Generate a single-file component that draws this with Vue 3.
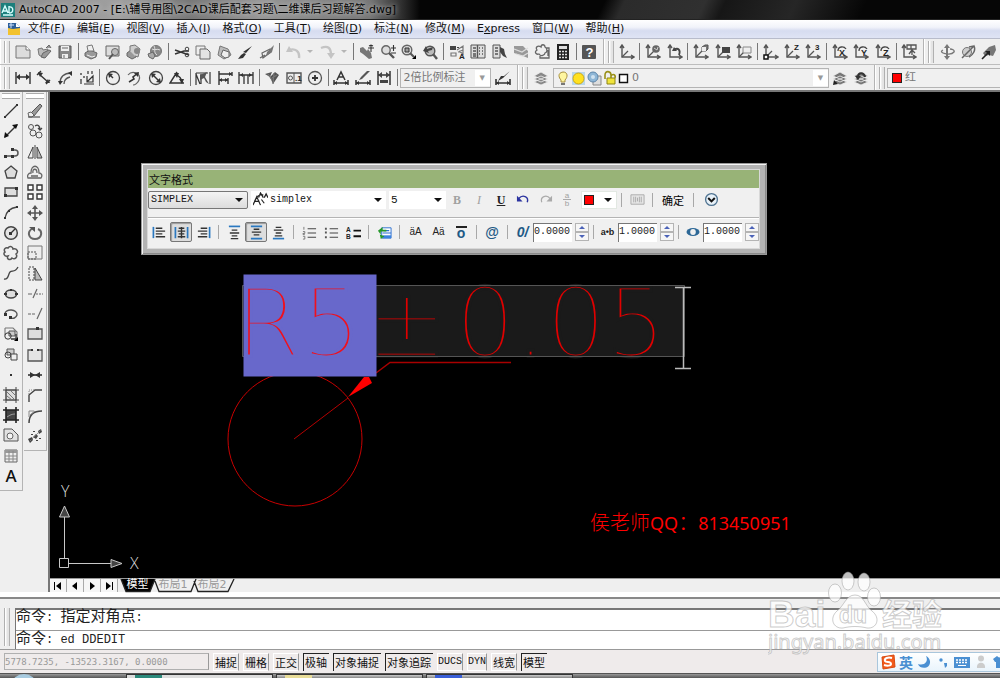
<script setup>
import { ref } from 'vue'

const axes = '<path d="M3 1v12h12M1 4l2-3 2 3M12 11l3 2-3 2" fill="none" stroke="#555" stroke-width="1.4"/>'
const diag = '<path d="M3 13L9 7" stroke="#555" stroke-width="1.2"/>'
const glyph = (t, x, y, s = 9) => `<text x="${x}" y="${y}" font-size="${s}" font-weight="700" font-family="Liberation Sans, sans-serif" fill="#222">${t}</text>`
const st = (d, w = 1.3, c = '#333') => `<path d="${d}" fill="none" stroke="${c}" stroke-width="${w}"/>`
const fl = (d, c = '#333') => `<path d="${d}" fill="${c}"/>`
const layers = (c = '#888') => `<path d="M1 12l7-3 7 3-7 3zM1 9l7-3 7 3-7 3zM1 6l7-4 7 4-7 3z" fill="${c}" stroke="#eee" stroke-width=".8"/>`

const icons = {
  new: '<path d="M1 2h10l4 4v8H1z" fill="#ddd" stroke="#777"/><path d="M11 2v4h4" fill="#fff" stroke="#777"/>',
  open: '<path d="M2 5l4-1 1 2 5-1-4 9-5-3z" fill="#bbb" stroke="#777"/><path d="M7 9l6-3 2 1-6 7-4-1zM10 4l3-3 2 3" fill="#999" stroke="#666"/>',
  save: '<path d="M2 2h12v12H2z" fill="#888" stroke="#555"/><path d="M4 2h8v5H4zM5 10h6v4H5z" fill="#eee"/><path d="M5 4h6M7 11v3" stroke="#666"/>',
  plot: '<path d="M2 9l5-3 7 3-1 4-5 2-6-3z" fill="#999" stroke="#666"/><path d="M5 7l-1-5 5-1 2 6z" fill="#eee" stroke="#777"/><path d="M4 11l5 2 3-1" stroke="#eee" fill="none"/>',
  preview: '<path d="M1 2h13v10H1z" fill="#ddd" stroke="#666"/><circle cx="10" cy="8" r="3.500" fill="#bbb" stroke="#666"/><path d="M8 10l-4 5" stroke="#555" stroke-width="2"/>',
  publish: '<path d="M1 9l4-3 6 3-1 4-4 2-5-3z" fill="#999" stroke="#666"/><path d="M4 7V2l5-1 5 4-2 8-3-1" fill="#ccc" stroke="#777"/><circle cx="11" cy="7" r="3" fill="#888"/>',
  dwf: '<circle cx="9" cy="7" r="5.500" fill="#888" stroke="#777"/><path d="M5 5c3 2 5-1 8 1M7 2c2 3-1 6 3 9" stroke="#ddd" fill="none"/><path d="M1 10l5-2 2 4-2 3-4-2z" fill="#aaa" stroke="#666"/>',
  cut: st('M1 6l14 5M1 10l9-3h5', 1.5) + '<circle cx="13" cy="5" r="1.800" fill="none" stroke="#444"/><circle cx="13" cy="11" r="1.800" fill="none" stroke="#444"/>',
  copy: '<path d="M1 2h9v9H1z" fill="#eee" stroke="#777"/><path d="M5 5h7l3 3v7H5z" fill="#e4e4e4" stroke="#666"/>',
  paste: '<path d="M4 2l8 3 3 6-7 4-6-4z" fill="#bbb" stroke="#777"/><path d="M7 6l6 2v5l-4 1-4-3z" fill="#eee" stroke="#666"/>',
  brush: fl('M15 2l-6 7-3-1zM7 9l2 1-3 4-5 1 3-4z', '#333'),
  blockedit: st('M3 9l8-4 1 3-8 6zM1 14l5-3', 1.2, '#666') + fl('M8 8l7-7-2 7-6 4z', '#777'),
  undo: st('M14 14c1-7-4-10-10-8', 2.4, '#c4c4c4') + fl('M1 8l3-6 4 6z', '#c4c4c4'),
  redo: st('M2 4c7-3 10 0 10 7', 2.4, '#c4c4c4') + fl('M8 9h8l-4 6z', '#c4c4c4'),
  pan: fl('M1 4l3-1 4 4 1-2 3 4 1 5-3 1-6-5-3-2z', '#777') + st('M12 1v7M9 4h6M10 2l2-1 2 1', 1.1),
  zoomrt: '<circle cx="6" cy="6" r="4.200" fill="#ddd" stroke="#666" stroke-width="1.400"/>' + st('M9 9l5 5', 2.4, '#555') + st('M11 4h5M13.500 1v6M11 9h5', 1.1),
  zoomwin: '<circle cx="6" cy="6" r="4.800" fill="#ddd" stroke="#666" stroke-width="1.400"/><path d="M4 4h4v4H4z" fill="#999" stroke="#333"/>' + st('M9 9l4 4', 2.2, '#555') + fl('M15 11v4h-4z', '#000'),
  zoomprev: '<circle cx="8" cy="7" r="4.800" fill="#bbb" stroke="#555" stroke-width="1.400"/>' + st('M11 10l4 5', 2.4, '#555') + fl('M1 7l3-5 1 3 6-2-1 3-4 1 1 2z', '#444'),
  props: fl('M1 2h6v4H1zM8 3h2v1H8z', '#444') + st('M8 6l6-4v8l-4-3M2 9h5v3H2zM9 8l5-2', 1.2, '#777') + glyph('A', 10, 15, 8),
  dcenter: '<path d="M1 1h14v13H1z" fill="#ddd" stroke="#555"/>' + st('M3 4h3M3 7h3M3 10h3M3 12h3M9 4h1M12 4h1M9 7h1M12 7h1M9 10h1M12 10h1M7.500 1v13', 1.4, '#555'),
  palettes: '<path d="M2 1h7v13H2z" fill="#ddd" stroke="#555"/>' + st('M4 4h3M4 7h3M4 10h3', 1.4, '#555') + fl('M9 3l4 2 1 5 2 4-4-2-3-4z', '#444'),
  sheets: fl('M1 2h9l5 5v7l-5-2-9-3z', '#999') + st('M1 5l8 3 6-4M3 10l7 2 5-3', 1.3, '#ddd'),
  markup: st('M12 4h3v10H6v-2M14 6v6M11 3c0-3-4-3-4 0-3-2-6 0-4 3-3 2-1 5 2 4 2 3 6 1 6-1 3-1 2-5 0-6z', 1.3, '#666'),
  calc: '<path d="M2 0h12v16H2z" fill="#222"/><path d="M4 2h8v3H4z" fill="#ddd"/><path d="M4 7.500h8M4 10.500h8M4 13.500h8" stroke="#ddd" stroke-width="1.500" stroke-dasharray="2 1"/>',
  help: '<rect x="1" y="1" width="14" height="14" rx="1" fill="#555"/><text x="4.500" y="13" font-size="13" font-weight="700" font-family="Liberation Sans, sans-serif" fill="#fff">?</text>',
  ucs: axes + diag, ucsworld: axes + diag + '<circle cx="11" cy="5" r="3.800" fill="#666"/><path d="M9 4l3 2 1-3" stroke="#ccc" fill="none"/>',
  ucsprev: axes + st('M12 11c2-5-1-8-5-5', 1.8, '#444') + fl('M5 7l2-4 3 4z', '#444'),
  ucsface: axes + diag + '<path d="M9 3l3-2h3v4l-2 2H9z" fill="#777" stroke="#555"/><path d="M9 3h4v4H9z" fill="#eee"/>',
  ucsobj: axes + diag + '<path d="M7 3h8v6H7z" fill="#444"/>', ucsview: axes + diag + '<path d="M7 3h8v6H7z" fill="#eee" stroke="#888"/>',
  ucsorigin: axes + diag + '<path d="M1 11h4v4H1z" fill="#fff" stroke="#111" stroke-width="1.500"/>',
  ucsz: axes + diag + glyph('Z', 10, 6, 8), ucs3: axes + diag + glyph('3', 10, 6, 8),
  rotx: axes + st('M6 7c0-5 6-5 8-2', 1.3, '#444') + glyph('X', 7, 12, 9), roty: axes + st('M6 7c0-5 6-5 8-2', 1.3, '#444') + glyph('Y', 8, 12, 9), rotz: axes + st('M6 7c0-5 6-5 8-2', 1.3, '#444') + glyph('Z', 8, 12, 9),
  ucsapply: axes + st('M6 1h9v4H6zM10 1v4M8 10l3-4v5M11 6l3 3', 1.3, '#555'),
  orbit1: fl('M8 0l3 4H9v8h2l-3 4-3-4h2V4H5z', '#777') + st('M4 6c-6 3 8 6 11 2 1-2-2-3-4-3', 1.3, '#777'),
  orbit2: '<circle cx="7" cy="8" r="4.500" fill="#ccc" stroke="#777"/>' + st('M2 14L14 2c2 4-1 9-5 11M9 3l5-1', 1.5, '#666'),
  orbit3: fl('M2 9l3-3 3-3 6-2 1 5-3 6-4-1-4 1z', '#777') + st('M1 15l7-7', 1.6, '#222') + fl('M9 7v5L4 7z', '#222'),
  linear: st('M1 2v12M15 2v12M2 7h12', 1.4) + fl('M1 7l4-3v6zM15 7l-4-3v6z'),
  aligned: st('M1 5l4-4M10 14l4-4M3 4l9 8', 1.4) + fl('M2 2l5 1-3 4zM14 13l-5 0 3-4z'),
  arc: st('M3 13C3 7 7 3 14 3M7 14c0-4 2-6 6-7', 1.3, '#555') + fl('M15 1v5l-4-3zM1 11h5l-3 4z'),
  ordinate: st('M2 14V9M5 14h10M8 6v6h6V6l-6 6M9 1v3M13 1v3', 1.2) + fl('M1 3h2v2H1zM4 6h2v2H4zM1 9h2v2H1z', '#777'),
  radius: '<circle cx="8" cy="8" r="6.500" fill="#eee" stroke="#444" stroke-width="1.300"/>' + st('M8 8L4 4', 1.4) + fl('M3 3l5 1-4 4z'),
  jogged: st('M2 5c4-5 14-2 11 5-1 3-4 5-6 5', 1.2, '#666') + st('M3 12l5-3-1-2 5-4', 1.6) + fl('M13 2l-1 5-4-4z'),
  diameter: '<circle cx="8" cy="8" r="6.500" fill="#eee" stroke="#444" stroke-width="1.300"/>' + st('M4 4l8 8', 1.5) + fl('M3 3l5 1-4 4zM13 13l-5-1 4-4z'),
  angular: st('M8 2L1 13h14M6 5c4 0 7 4 7 8', 1.4) + fl('M5 3h5l-2 5zM10 9h5l-2 5z'),
  quick: st('M1 3v12M1 3l12 0M15 2v12M1 4l4 10M6 4v10', 1.2) + fl('M5 5l7-3-2 5 4 7-3-2-2-4-4 2z', '#555'),
  baseline: st('M2 1v14M2 4h13M2 10h9M11 8v6M15 2v4', 1.4) + fl('M2 10l3-2v4zM15 4l-3-2v4zM11 10l-3-2v4z'),
  continue: st('M1 2v12M6 5v9M10 5v9M15 2v12M1 5h14', 1.3) + fl('M5 3v4l-3-2zM11 3v4l3-2z'),
  leader: fl('M1 4l7-2-2 5zM6 7l5-5 4 3-6 9z', '#555') + st('M4 4l4 6M10 3l-1 11M13 5l-5 3', 1.2, '#777'),
  tolerance: '<path d="M1 3h14v10H1z" fill="#eee" stroke="#555" stroke-width="1.400"/><path d="M8 3v10" stroke="#555"/><circle cx="4.500" cy="8" r="2" fill="none" stroke="#555"/>' + glyph('.1', 9, 11, 8),
  center: '<circle cx="8" cy="8" r="6.500" fill="#eee" stroke="#555" stroke-width="1.300"/>' + st('M8 5v6M5 8h6', 1.8),
  dimedit: st('M1 10v5M15 10v5M1 13h14M4 10l4-8 4 8M5 7h6', 1.5) + fl('M1 13l3-2v4zM15 13l-3-2v4z'),
  dimtedit: st('M1 10v5M15 10v5M1 13h14', 1.5) + fl('M15 1l-8 8-3 1 2-3 6-6z', '#555') + fl('M1 13l3-2v4zM15 13l-3-2v4z'),
  dimupdate: st('M2 1v14M14 1v14M2 5h12', 1.5) + fl('M2 5l4-3v6zM14 5l-4-3v6zM4 10h8v3H4z', '#444'),
  dimstyle: st('M1 9v6M15 9v6M1 13h14', 1.6) + fl('M15 1l-7 7-5 3 3-5 3 0z') + fl('M1 13l3-2v4zM15 13l-3-2v4z'),
  layers: layers(), layerobj: layers('#777') + fl('M1 15l1-5 4 4z', '#222'), layerprev: layers('#777') + st('M5 7c0-5 6-5 7 0', 2, '#333') + fl('M2 6h6l-3 4z'),
  line: st('M2 14L14 2', 1.3) + fl('M1 13h2v2H1zM13 1h2v2h-2z'),
  xline: st('M2 14L14 2', 1.5) + fl('M1 15l1-6 4 4zM15 1l-6 1 4 4z', '#111'),
  pline: st('M3 12h9c4 0 4-6 0-6h-2', 1.5, '#555') + fl('M1 11h3v3H1zM8 11h3v3H8zM8 4h3v3H8z'),
  polygon: '<path d="M8 2l6 5-2 7H4L2 7z" fill="#ddd" stroke="#444" stroke-width="1.300"/>',
  rect: '<path d="M2 4h12v8H2z" fill="#ddd" stroke="#444" stroke-width="1.300"/>' + fl('M1 10h3v3H1zM12 3h3v3h-3z'),
  arcd: st('M2 14C3 8 7 4 14 3', 1.3, '#444') + fl('M1 13h2v2H1zM5 6h2v2H5zM13 2h2v2h-2z'),
  circle: '<circle cx="8" cy="8" r="6.300" fill="#e4e4e4" stroke="#444" stroke-width="1.500"/>' + st('M8 8l4-4', 1.2) + fl('M6 7h3v3H6z'),
  cloud: st('M5 3c2-3 5-1 5 1 4-1 6 3 3 5 2 3-1 6-4 4-2 3-6 1-4-2-4 1-5-3-3-4-2-3 1-5 3-4z', 1.5, '#555'),
  spline: st('M1 14c5 1 4-5 6-7s5 1 8-5', 1.3, '#444'),
  ellipse: '<ellipse cx="8" cy="8" rx="5.500" ry="4" fill="#ddd" stroke="#444" stroke-width="1.600"/>' + fl('M1 7h3v2H1zM12 7h3v2h-3zM7 3h2v2H7z'),
  ellarc: st('M2 8c0-6 13-5 12 1-1 3-4 4-6 3', 1.4, '#555') + fl('M1 7h3v3H1zM6 10h3v3H6z'),
  insert: st('M2 2h8l4 4v6M2 2v7', 1.1, '#777') + '<path d="M6 5h6v5H6z" fill="#ccc" stroke="#555"/><circle cx="5" cy="10" r="3.200" fill="none" stroke="#333"/>' + st('M8 13h5V8', 1.3) + fl('M15 11v4h-4z', '#000'),
  block: '<path d="M4 3h7v6H4z" fill="#ccc" stroke="#555"/><circle cx="5" cy="9" r="3" fill="none" stroke="#444"/><path d="M8 8h6v6H8z" fill="#eee" stroke="#444"/>',
  point: fl('M7 7h2v2H7z'),
  hatch: '<path d="M3 3h10v10H3z" fill="#ddd" stroke="#555"/>' + st('M0 3h16M0 13h16M3 0v16M13 0v16', 1, '#444') + st('M4 9l5 4M4 5l8 8M8 4l5 5', 1, '#777'),
  gradient: '<path d="M3 3h10v10H3z" fill="#444"/><path d="M4 10c3-2 5-3 8-3" stroke="#999" fill="none"/>' + st('M0 3h16M0 13h16M3 0v16M13 0v16', 1.6, '#222'),
  region: '<path d="M1 2h8l6 6v6H1z" fill="#e2e2e2" stroke="#555"/><circle cx="7" cy="9" r="3" fill="#f4f4f4" stroke="#666"/>',
  table: '<path d="M2 2h12v12H2z" fill="#eee" stroke="#666"/><path d="M2 2h12v3H2z" fill="#999"/><path d="M2 8h12M2 11h12M6 3v11M10 3v11" stroke="#888"/>',
  erase: '<path d="M3 11L13 1l2 2-8 10z" fill="#999" stroke="#555"/><path d="M1 10l3-1 3 3-2 2H2z" fill="#eee" stroke="#666"/>' + st('M1 14h12', 1.2, '#555'),
  copyobj: '<circle cx="4" cy="4" r="2.500" fill="#eee" stroke="#555"/><circle cx="6" cy="10" r="3" fill="#eee" stroke="#555"/><circle cx="12" cy="12" r="3" fill="#eee" stroke="#555"/>' + st('M8 3c3-2 5 0 5 4M11 5l2 2 2-2', 1.3, '#444'),
  mirror: '<path d="M6 3v11H1z" fill="#eee" stroke="#444"/><path d="M10 3v11h5z" fill="#bbb" stroke="#444"/>' + st('M8 1v14', 1, '#444'),
  offset: st('M1 14h13c2-3 0-5-2-5 0-9-8-9-8 0-3 0-4 3-3 5zM4 12h7M6 9c-1-5 4-5 4 0', 1.3, '#666'),
  array: '<path d="M1 1h5v5H1zM10 1h5v5h-5zM1 10h5v5H1zM10 10h5v5h-5z" fill="#fff" stroke="#333" stroke-width="1.400"/>',
  move: st('M8 2v12M2 8h12', 1.6, '#555') + fl('M8 0l3 4H5zM8 16l3-4H5zM0 8l4-3v6zM16 8l-4-3v6z', '#555'),
  rotate: st('M6 3c-7 4-4 11 2 11 7 0 8-8 3-10', 2, '#666') + fl('M2 2h6v5z', '#555'),
  scale: '<path d="M1 1h14v13H1z" fill="#eee" stroke="#777"/><path d="M1 7h8v7H1z" fill="none" stroke="#555" stroke-dasharray="2 1"/>',
  stretch: '<path d="M2 1h5v13H2z" fill="#eee" stroke="#444" stroke-dasharray="2 1"/><path d="M8 2l7 12H8z" fill="#bbb" stroke="#444"/>',
  trim: st('M1 8h4M6 12l4-9', 1.2, '#666') + '<path d="M9 8h7" stroke="#666" stroke-dasharray="2 1"/>',
  extend: '<path d="M1 8h8" stroke="#666" stroke-dasharray="3 1"/>' + st('M10 13l5-11', 1.2, '#666'),
  breakpt: '<path d="M1 3h14v10H1z" fill="#ddd" stroke="#555" stroke-width="1.300"/>' + fl('M9 1h3v3H9z'),
  breakk: '<path d="M2 3v11h12V3" fill="#e4e4e4" stroke="none"/>' + st('M5 3H1v11h14V3h-4', 1.3, '#555') + fl('M4 2h2v2H4zM10 2h2v2h-2z'),
  join: st('M1 8h14', 1.6) + fl('M3 5l5 3-5 3zM13 5l-5 3 5 3z'),
  chamfer: st('M2 15V8l6-5h7', 1.4, '#444') + '<path d="M2 7V3h5" fill="none" stroke="#888" stroke-dasharray="1 1"/>',
  fillet: st('M2 15c0-8 4-12 13-12', 1.5, '#444') + st('M2 9V3h5M3 7l5-4', 1, '#888'),
  explode: fl('M1 11l4-2 1 3-3 3zM6 9l3-3 2 2-2 3zM11 3l3-2 1 3-3 2zM6 3h2v1H6zM12 10h2v1h-2zM4 6h2v1H4zM9 12h2v1H9z', '#444') + '<path d="M3 13L14 2" stroke="#777" stroke-dasharray="2 1"/>',
  tl: st('M1.500 2v12', 1.8, '#2a78c0') + st('M4 3.500h7M4 6.500h10M4 9.500h7M4 12.500h10', 1.5),
  tc: st('M1.500 2v12M14.500 2v12', 1.8, '#2a78c0') + st('M5 3.500h6M4 6.500h8M5 9.500h6M4 12.500h8M8 2v12', 1.5),
  tr: st('M14.500 2v12', 1.8, '#2a78c0') + st('M5 3.500h7M2 6.500h10M5 9.500h7M2 12.500h10', 1.5),
  vt: st('M2 1.500h12', 1.8, '#2a78c0') + st('M5 5.500h6M3 8.500h10M5 11.500h6M4 14.500h8', 1.4),
  vm: st('M2 1.500h12M2 14.500h12', 1.8, '#2a78c0') + st('M5 4.500h6M3 7.500h10M5 10.500h6', 1.4),
  vb: st('M2 14.500h12', 1.8, '#2a78c0') + st('M5 2.500h6M3 5.500h10M5 8.500h6M4 11.500h8', 1.4),
  num: st('M6 4h9M6 8.500h9M6 13h9', 1.2, '#444') + st('M2 2v3M1 7h2v2H1v1h2M1 12h2v3H1', 1, '#777'),
  bul: st('M6 4h9M6 8.500h9M6 13h9', 1.2, '#444') + fl('M1 3h2v2H1zM1 7h2v2H1zM1 12h2v2H1z', '#555'),
  abc: st('M8 6h8M8 12h8', 2, '#111') + glyph('A', 0, 7, 7) + glyph('B', 0, 15, 7),
  field: '<path d="M5 3h10v11H5z" fill="#fff" stroke="#2a6fd0"/><path d="M6 11h9v3H6z" fill="#3b83e0"/>' + st('M7 6h6M6 8.500h9', 1.2, '#2a6fd0') + fl('M1 6l5-4v3h4v2H4v3zM3 10l5 2-4 3z', '#26982b'),
  undo2: st('M3 7c4-5 11-2 9 4', 1.5, '#2b33a0') + fl('M1 4v6h6z', '#2b33a0'), redo2: st('M13 7c-4-5-11-2-9 4', 1.3, '#aaa') + fl('M15 4v6H9z', '#aaa'),
  ruler: '<path d="M1 3h14v10H1z" fill="#e6e6e6" stroke="#aaa"/>' + st('M4 5v6M6 5v6M8 6v4M10 5v6M12 5v6', 1, '#aaa'),
  opts: '<circle cx="8" cy="8" r="6.300" fill="#e8f1f8" stroke="#4e7290" stroke-width="1.400"/>' + st('M4.500 6.500L8 10l3.500-3.500', 2.2, '#111'),
  font: st('M0 14l4-9 4 9M1 10h6M6 6l2-5 3 5M12 6l2-4 2 4M8 3h3M9 8l3 4M4 5l4-2', 1.3, '#222'),
  eye: '<ellipse cx="8" cy="8" rx="6.500" ry="4" fill="#2c6796"/><ellipse cx="8" cy="8" rx="2.800" ry="3" fill="#f0f0f0"/>',
}

const std = ['new', 'open', 'save', '|', 'plot', 'preview', 'publish', 'dwf', '|', 'cut', 'copy', 'paste', 'brush', 'blockedit', '|', 'undo', 'v', 'redo', 'v', '|', 'pan', 'zoomrt', 'zoomwin', 'zoomprev', '|', 'props', 'dcenter', 'palettes', 'sheets', 'markup', 'calc', '|', 'help']
const ucsBar = ['ucs', '|', 'ucsworld', 'ucsprev', '|', 'ucsface', 'ucsobj', 'ucsview', '|', 'ucsorigin', 'ucsz', 'ucs3', '|', 'rotx', 'roty', 'rotz', '|', 'ucsapply']
const orbitBar = ['orbit1', 'orbit2', 'orbit3']
const dims = ['linear', 'aligned', 'arc', 'ordinate', '|', 'radius', 'jogged', 'diameter', 'angular', '|', 'quick', 'baseline', 'continue', '|', 'leader', 'tolerance', 'center', '|', 'dimedit', 'dimtedit', 'dimupdate', '|']
const draw = ['line', 'xline', 'pline', 'polygon', 'rect', 'arcd', 'circle', 'cloud', 'spline', 'ellipse', 'ellarc', 'insert', 'block', 'point', 'hatch', 'gradient', 'region', 'table']
const modify = ['erase', 'copyobj', 'mirror', 'offset', 'array', 'move', 'rotate', 'scale', 'stretch', 'trim', 'extend', 'breakpt', 'breakk', 'join', 'chamfer', 'fillet', 'explode']
const menus = [['文件', 'F'], ['编辑', 'E'], ['视图', 'V'], ['插入', 'I'], ['格式', 'O'], ['工具', 'T'], ['绘图', 'D'], ['标注', 'N'], ['修改', 'M'], ['Express', ''], ['窗口', 'W'], ['帮助', 'H']]
const rowA = ['tl', 'tc', 'tr', '|', 'vt', 'vm', 'vb', '|', 'num', 'bul', 'abc', '|', 'field', '|']
const spins = ref([
  { key: 'oblique', label: '0/', value: '0.0000' },
  { key: 'tracking', label: 'a•b', value: '1.0000' },
  { key: 'width', label: '', value: '1.0000' },
])
const modes = ref([['捕捉', 0], ['栅格', 0], ['正交', 0], ['极轴', 1], ['对象捕捉', 1], ['对象追踪', 1], ['DUCS', 0], ['DYN', 0], ['线宽', 0], ['模型', 1]])
</script>

<template>
  <div class="app">
    <header class="title">
      <svg class="logo" viewBox="0 0 14 14"><rect width="14" height="14" fill="#1c7f7c" /><path d="M1 10L4 3l3 7M2 8h4M8 3v7M8 4c5-1 5 6 0 6M2 12h10" fill="none" stroke="#d8ffff" stroke-width="1.400" /></svg>
      <h1>AutoCAD 2007 - [E:\辅导用图\2CAD课后配套习题\二维课后习题解答.dwg]</h1>
    </header>

    <nav class="menu">
      <svg class="docico" viewBox="0 0 14 14"><path d="M1 1h8l4 4v8H1z" fill="#2c5e9a" /><path d="M1 6l5 1 7-1v7H1z" fill="#f2c230" /><path d="M2 3h5M4 1v5" stroke="#cfe4ff" /><path d="M9 1l4 4H9z" fill="#fff" /></svg>
      <button v-for="m in menus" :key="m[0]" type="button">
        <template v-if="m[1]">{{ m[0] }}(<u>{{ m[1] }}</u>)</template>
        <template v-else>E<u>x</u>press</template>
      </button>
    </nav>

    <div class="bars">
      <div class="band band-std"><i class="grip"></i>
        <template v-for="(n, i) in std" :key="i">
          <i v-if="n === '|'" class="sep"></i>
          <button v-else-if="n === 'v'" type="button" class="caret" aria-label="more"></button>
          <button v-else type="button" class="tool" :aria-label="n"><svg viewBox="0 0 16 16" v-html="icons[n]"></svg></button>
        </template>
      </div>
      <div class="band band-ucs"><i class="grip"></i>
        <template v-for="(n, i) in ucsBar" :key="i">
          <i v-if="n === '|'" class="sep"></i>
          <button v-else type="button" class="tool" :aria-label="n"><svg viewBox="0 0 16 16" v-html="icons[n]"></svg></button>
        </template>
      </div>
      <div class="band band-last"><i class="grip"></i>
        <button v-for="n in orbitBar" :key="n" type="button" class="tool fixed" :aria-label="n"><svg viewBox="0 0 16 16" v-html="icons[n]"></svg></button>
      </div>
    </div>

    <div class="bars">
      <div class="band band-dim"><i class="grip"></i>
        <template v-for="(n, i) in dims" :key="i">
          <i v-if="n === '|'" class="sep"></i>
          <button v-else type="button" class="tool" :aria-label="n"><svg viewBox="0 0 16 16" v-html="icons[n]"></svg></button>
        </template>
        <span class="combo style-combo"><select aria-label="标注样式"><option>2倍比例标注</option></select></span>
        <button type="button" class="tool" aria-label="dimstyle"><svg viewBox="0 0 16 16" v-html="icons.dimstyle"></svg></button>
      </div>
      <div class="band band-layer"><i class="grip"></i>
        <button type="button" class="tool fixed" aria-label="layers"><svg viewBox="0 0 16 16" v-html="icons.layers"></svg></button>
        <span class="combo layer-combo">
          <svg class="layer-state" viewBox="0 0 74 16">
            <path d="M6 2c-6 1-4 6-2 8v2h4v-2c3-3 3-8-2-8z" fill="#fff6a0" stroke="#a8903c" /><path d="M4 13h4v2H4z" fill="#777" />
            <path d="M15 2h13v13H15z" fill="#b9d7ea" /><circle cx="21.500" cy="8.500" r="5.500" fill="#ffe11f" stroke="#caa61a" />
            <path d="M36 6h8v9h-8z" fill="#ddd" stroke="#888" /><circle cx="36" cy="7" r="5" fill="#8eb6d6" stroke="#5d86aa" /><circle cx="36" cy="7" r="2" fill="#cfe2f0" />
            <path d="M48 9V5c0-5 6-4 6 0v4M54 6c2-3 5-1 4 2" fill="none" stroke="#99901a" stroke-width="1.600" /><path d="M50 8h8v6h-8z" fill="#f0e43c" stroke="#8d8417" />
            <path d="M62.500 4.500h8v8h-8z" fill="#fff" stroke="#111" stroke-width="1.400" />
          </svg>
          <select aria-label="图层"><option>0</option></select>
        </span>
        <button type="button" class="tool fixed" aria-label="layerobj"><svg viewBox="0 0 16 16" v-html="icons.layerobj"></svg></button>
        <button type="button" class="tool fixed" aria-label="layerprev"><svg viewBox="0 0 16 16" v-html="icons.layerprev"></svg></button>
      </div>
      <div class="band band-last"><i class="grip"></i>
        <span class="combo color-combo"><i class="swatch"></i><select aria-label="颜色"><option>红</option></select></span>
      </div>
    </div>

    <main class="work">
      <aside class="dock">
        <div class="palette"><i class="hgrip"></i>
          <button v-for="n in draw" :key="n" type="button" :aria-label="n"><svg viewBox="0 0 16 16" v-html="icons[n]"></svg></button>
          <button type="button" class="mtext">A</button>
        </div>
        <div class="palette short"><i class="hgrip"></i>
          <button v-for="n in modify" :key="n" type="button" :aria-label="n"><svg viewBox="0 0 16 16" v-html="icons[n]"></svg></button>
        </div>
      </aside>

      <section class="view">
        <div class="canvas">
          <svg class="drawing">
            <g transform="translate(-50 -92)" fill="none">
              <circle cx="295" cy="439" r="67" stroke="#c80000" />
              <path d="M294 439l54-41" stroke="#b40000" />
              <path d="M348 397l16-20h5l3 6z" fill="#f00" />
              <path d="M376 373l14-10.500h121" stroke="#a80000" stroke-width="1.500" />
              <path d="M242 285h443v72h-443z" fill="#1a1a1a" />
              <g class="stroke-text"><text class="dark" x="367" y="356">±</text><text class="dark" x="455" y="356">0.05</text></g>
              <path d="M242.500 285.500h442v71h-442z" stroke="#555" />
              <path d="M243.500 274.500h133v102h-133z" fill="#6868cb" />
              <g class="stroke-text"><text x="235" y="356">R5</text></g>
              <path d="M683.500 288v80M675 287.500h16M675 368.500h16" stroke="#bbb" stroke-width="1.500" />
              <g stroke="#c8c8c8">
                <path d="M59.500 558.500h9v9h-9zM64.500 558v-41M69 563.500h42" />
                <path d="M64.500 506l-5 11h10zM122 563.500l-11-4v8z" fill="#444" />
              </g>
              <g class="axis"><text x="61" y="497">Y</text><text x="130" y="569">X</text></g>
            </g>
          </svg>
          <p class="contact"><span>侯老师</span>QQ<span>：</span>813450951</p>

          <div class="editor" role="dialog" aria-label="文字格式">
            <div class="editor-in">
              <h2>文字格式</h2>
              <div class="row row1">
                <span class="pick framed"><select aria-label="样式"><option>SIMPLEX</option></select></span>
                <span class="pick font"><svg viewBox="0 0 16 16" v-html="icons.font"></svg><select aria-label="字体"><option>simplex</option></select></span>
                <span class="pick size"><select aria-label="字高"><option>5</option></select></span>
                <button type="button" class="eb ser off"><b>B</b></button>
                <button type="button" class="eb ser off"><em>I</em></button>
                <button type="button" class="eb ser"><b><u>U</u></b></button>
                <button type="button" class="eb" aria-label="undo"><svg viewBox="0 0 16 16" v-html="icons.undo2"></svg></button>
                <button type="button" class="eb" aria-label="redo"><svg viewBox="0 0 16 16" v-html="icons.redo2"></svg></button>
                <button type="button" class="eb frac off"><span>a</span><span>b</span></button>
                <span class="pick color"><i class="swatch"></i><select aria-label="文字颜色"><option></option></select></span>
                <i class="esep"></i>
                <button type="button" class="eb" aria-label="ruler"><svg viewBox="0 0 16 16" v-html="icons.ruler"></svg></button>
                <i class="esep"></i>
                <button type="button" class="ok">确定</button>
                <i class="esep"></i>
                <button type="button" class="eb opt" aria-label="options"><svg viewBox="0 0 16 16" v-html="icons.opts"></svg></button>
              </div>
              <div class="row row2">
                <template v-for="(n, i) in rowA" :key="i">
                  <i v-if="n === '|'" class="esep"></i>
                  <button v-else type="button" class="eb" :class="{ on: n === 'tc' || n === 'vm' }" :aria-label="n"><svg viewBox="0 0 16 16" v-html="icons[n]"></svg></button>
                </template>
                <button type="button" class="eb case">äA</button>
                <button type="button" class="eb case">Aä</button>
                <button type="button" class="eb over">o</button>
                <i class="esep"></i>
                <button type="button" class="eb at">@</button>
                <i class="esep"></i>
                <template v-for="(s, i) in spins" :key="s.key">
                  <i v-if="i" class="esep narrow"></i>
                  <label :for="s.key">
                    <span v-if="s.label" class="lab" :class="s.key">{{ s.label }}</span>
                    <span v-else class="lab"><svg viewBox="0 0 16 16" v-html="icons.eye"></svg></span>
                  </label>
                  <input :id="s.key" v-model="s.value" type="text" :aria-label="s.key">
                  <span class="ud"><button type="button" aria-label="up"></button><button type="button" class="dn" aria-label="down"></button></span>
                </template>
              </div>
            </div>
          </div>
        </div>

        <div class="tabs">
          <button type="button" aria-label="first"><svg viewBox="0 0 16 12"><path d="M4 2v8h1V2zM11 2v8L6 6z" /></svg></button>
          <button type="button" aria-label="previous"><svg viewBox="0 0 16 12"><path d="M10 2v8L5 6z" /></svg></button>
          <button type="button" aria-label="next"><svg viewBox="0 0 16 12"><path d="M6 2v8l5-4z" /></svg></button>
          <button type="button" aria-label="last"><svg viewBox="0 0 16 12"><path d="M5 2v8l5-4zM11 2v8h1V2z" /></svg></button>
          <div class="sheets">
            <svg viewBox="0 0 120 14"><path d="M1 0l5 12.500h24L35 0z" fill="#000" /><path d="M1 0l5 12.500h24L35 0M35 2l4 10.500h32L76 0M74 2l4 10.500h30L114 0" fill="none" stroke="#222" stroke-width="1.300" /></svg>
            <button type="button" class="cur">模型</button><button type="button">布局1</button><button type="button">布局2</button>
          </div>
        </div>
      </section>
    </main>

    <section class="command">
      <i class="grip"></i>
      <div class="lines">
        <p><span>命令</span>: <span>指定对角点</span>:</p>
        <label for="cmd"><span>命令</span>:&nbsp;</label><input id="cmd" type="text" value="ed DDEDIT">
      </div>
    </section>

    <footer class="status">
      <output>5778.7235, -13523.3167, 0.0000</output>
      <button v-for="m in modes" :key="m[0]" type="button" :class="{ down: m[1], lat: m[0] < '~' }" @click="m[1] = m[1] ? 0 : 1">{{ m[0] }}</button>
      <div class="ime">
        <svg viewBox="0 0 16 16"><path d="M2 3l12-2 1 12-12 2z" fill="#f25a1c" stroke="#d84a10" /><path d="M12 4c-4-1-8 0-7 3 1 2 6 0 6 3 0 2-4 2-7 1" fill="none" stroke="#fff" stroke-width="2" /></svg>
        <span>英</span>
        <svg viewBox="0 0 16 16"><path d="M10 2c3 6-2 10-8 8 2 6 13 5 12-3-1-3-2-4-4-5z" fill="#4a8fd2" /></svg>
        <svg viewBox="0 0 16 16"><circle cx="6" cy="6" r="1.700" fill="#4a8fd2" /><path d="M9 9h3v3l-2 2z" fill="#4a8fd2" /></svg>
        <svg viewBox="0 0 16 16"><path d="M0 3h16v11H0z" fill="#4a8fd2" /><path d="M2 6h12M2 8.500h12" stroke="#fff" stroke-dasharray="2 1" stroke-width="1.400" /><path d="M4 11.500h8" stroke="#fff" /></svg>
        <svg viewBox="0 0 16 16"><circle cx="8" cy="4.500" r="3" fill="#ccc" /><path d="M4 14c-1-7 9-7 8 0z" fill="#ccc" /></svg>
        <svg viewBox="0 0 16 16"><path d="M1 5l4-3c2 2 4 2 6 0l4 3-2 3h-1v6H4V8H3z" fill="#4a8fd2" /></svg>
      </div>
    </footer>

    <div class="taskbar"><i class="orb"></i><i class="task lit"><i class="teal"></i></i><i class="task"><i class="yel"></i></i><i class="task"><i class="blu"></i></i></div>

    <svg class="mark" viewBox="0 0 190 90">
      <g fill="#fff" fill-opacity=".75" stroke="#9a9a9a" stroke-opacity=".5">
        <ellipse cx="67" cy="23" rx="6.500" ry="9" /><ellipse cx="80" cy="11" rx="6" ry="9" /><ellipse cx="96" cy="12" rx="6" ry="9" /><ellipse cx="106" cy="27" rx="6.500" ry="9" />
        <path d="M87 25c9 0 10 11 17 16 9 7 5 18-5 17-8-2-16-2-24 0-10 1-14-10-6-17 7-5 9-16 18-16z" />
        <text class="bai" x="0" y="57">Bai</text><text class="du" x="71" y="53">du</text><text class="jy" x="114" y="55">经验</text>
        <text class="url" x="0" y="79">jingyan.baidu.com</text>
      </g>
    </svg>
  </div>
</template>

<style>
html, body { background: #efefef; overflow: hidden; }
</style>

<style scoped>
* { box-sizing: border-box; }
.app { --ui: "DejaVu Sans", "Noto Sans CJK SC", sans-serif; --mono: "Liberation Mono", "Noto Sans CJK SC", monospace; position: relative; display: flex; flex-direction: column; min-height: 100vh; font: 11px/14px var(--ui); color: #222; background: #efefef; overflow: hidden; }
button, input, select { font: inherit; color: inherit; border: 0; padding: 0; margin: 0; background: none; border-radius: 0; outline: 0; }
button { display: flex; align-items: center; justify-content: center; }
select { appearance: none; flex: 1; min-width: 0; }
i { font-style: normal; }
h1, h2, p { margin: 0; font-weight: 400; }

.title { height: 20px; display: flex; align-items: center; padding-left: 1px; border-bottom: 1px solid #222; background: linear-gradient(90deg, #8b8b8b 0, #a0a0a0 120px, #777 190px, #969696 260px, #777 370px, transparent 420px), linear-gradient(115deg, #050505 60%, #2b2b2b 62%, #303030 70%, #161616 72%, #262626 79%, #060606 86%); }
.logo { width: 14px; height: 14px; margin-right: 4px; }
h1 { font-size: 11px; line-height: 18px; color: #000; white-space: nowrap; text-shadow: 0 0 5px #ddd; }

.menu { height: 19px; display: flex; align-items: center; padding-left: 7px; background: linear-gradient(#fff, #f1f3fa 40%, #d6dcf0 60%, #dfe4f4); border-bottom: 1px solid #b8bccb; }
.docico { width: 14px; height: 14px; margin-right: 7px; }
.menu button { margin-right: 12px; white-space: nowrap; display: block; color: #111; }

.bars { height: 26px; display: flex; border-bottom: 1px solid #bdbdbd; background: #efefef; }
.bars + .bars { height: 27px; border-bottom: 2px solid #777; }
.band { display: flex; align-items: center; padding: 0 3px; border-right: 1px solid #b4b4b4; border-left: 1px solid #fff; min-width: 0; }
.band-std { flex: 0 0 604px; }
.band-ucs { flex: 0 0 320px; }
.band-dim { flex: 0 0 518px; }
.band-layer { flex: 0 0 357px; }
.band-last { flex: 1; border-right: 0; padding-right: 0; }
.grip { flex: none; width: 6px; height: 22px; margin-right: 2px; border: solid #b0b0b0; border-width: 0 1px; box-shadow: inset 1px 0 #fff, inset -2px 0 #e4e4e4; }
.tool { flex: 1 1 0; height: 22px; min-width: 0; }
.tool.fixed { flex: 0 0 21px; }
.tool svg { flex: none; width: 16px; height: 16px; }
.sep { flex: none; width: 1px; height: 17px; margin: 0 2px; background: #777; }
.caret { flex: 0 0 13px; }
.caret::after { content: ""; border: 3px solid transparent; border-top-color: #b5b5b5; border-bottom: 0; }
.combo { position: relative; display: flex; align-items: center; height: 20px; border: 1px solid #b4b4b4; background: #f0f0f0; color: #777; }
.combo::after { content: "▼"; flex: none; width: 15px; height: 16px; background: #fff; color: #999; font: 7px/17px "DejaVu Sans", sans-serif; text-align: center; }
.style-combo { flex: 0 0 91px; padding-left: 3px; margin-right: 2px; }
.layer-combo { flex: 1; padding-left: 3px; margin-left: 2px; }
.layer-state { flex: none; width: 74px; height: 16px; margin-right: 1px; }
.color-combo { flex: 1; padding-left: 4px; border-right: 0; }
.color-combo::after { display: none; }
.swatch { flex: none; width: 10px; height: 10px; background: #f00; border: 1px solid #222; margin-right: 3px; }

.work { flex: 1; display: flex; min-height: 0; }
.dock { flex: 0 0 48px; display: flex; align-items: flex-start; }
.palette { width: 23px; height: 399px; margin-right: 1px; display: flex; flex-direction: column; padding: 1px 0 4px; border: solid #b4b4b4; border-width: 0 1px 1px 0; }
.palette.short { height: 359px; }
.palette button { flex: 1 1 0; min-height: 0; }
.palette svg { width: 16px; height: 16px; }
.palette .mtext { font: 500 17px/20px "Noto Sans", sans-serif; color: #111; }
.hgrip { flex: none; height: 6px; margin: 0 2px 2px; border: solid #aaa; border-width: 1px 0; background: #fff; }
.view { flex: 1; min-width: 0; display: flex; flex-direction: column; border-left: 2px solid #777; }
.canvas { position: relative; flex: 1; min-height: 0; background: #000; overflow: hidden; }
.drawing { position: absolute; inset: 0; width: 100%; height: 100%; }
.stroke-text { fill: #f0101c; stroke: #6868cb; stroke-width: 3px; font: 200 95px "DejaVu Sans Light", "DejaVu Sans", sans-serif; }
.stroke-text .dark { fill: #e00000; stroke: #1a1a1a; }
.axis { fill: #ddd; font: 300 16px "Open Sans", sans-serif; }
.contact { position: absolute; left: 540px; top: 417px; color: #f00; font: 18px/26px "Noto Sans", sans-serif; white-space: nowrap; }
.contact span { font: 300 20px/26px "Noto Sans CJK SC", sans-serif; }

.editor { position: absolute; left: 91px; top: 71px; width: 626px; padding: 5px 6px 5px 5px; background: #b3b3b3; border: 1px solid #999; box-shadow: inset 1px 1px #f4f4f4, inset -1px -1px #8a8a8a; }
.editor-in { background: #f0f0f0; border: 1px solid #d8d8d8; height: 80px; }
h2 { height: 18px; font: 11px/18px "Noto Sans CJK SC", sans-serif; color: #111; background: #98b377; padding-left: 1px; }
.row { display: flex; align-items: center; }
.row1 { height: 30px; padding-bottom: 6px; border-bottom: 1px solid #b4b4b4; }
.row2 { height: 27px; border-top: 1px solid #fff; }
.pick { position: relative; display: flex; align-items: center; height: 18px; background: #fff; font: 10px/14px var(--mono); color: #111; padding: 0 4px 0 2px; }
.pick::after { content: ""; border: 4px solid transparent; border-top-color: #111; border-bottom: 0; }
.pick svg { width: 15px; height: 15px; margin-right: 2px; }
.framed { flex: 0 0 100px; background: linear-gradient(#f4f4f4, #dcdcdc); border: 1px solid #777; border-radius: 2px; margin-right: 3px; }
.font { flex: 0 0 135px; margin-right: 3px; }
.size { flex: 0 0 57px; font-size: 11px; }
.color { flex: 0 0 36px; margin-left: 3px; border: 1px solid #e2e8e2; }
.eb { flex: 0 0 22px; height: 20px; }
.eb svg { width: 15px; height: 15px; }
.eb.on { border: 1px solid #777; border-radius: 2px; background: #ddd; box-shadow: inset 1px 1px 1px #999; }
.ser { font: 12px/16px "Liberation Serif", serif; }
.off { color: #a0a0a0; }
.frac { flex-direction: column; font: 8px/7px "Liberation Sans", sans-serif; }
.frac span:first-child { border-bottom: 1px solid #aaa; padding: 0 2px; }
.esep { flex: none; width: 1px; height: 14px; margin: 0 4px; background: #a8a8a8; }
.esep.narrow { margin: 0 3px 0 4px; }
.ok { flex: 0 0 32px; font: 11px/14px "Noto Sans CJK SC", sans-serif; color: #000; }
.opt { margin-left: 2px; }
.case { flex-basis: 23px; font: 10px/14px "Liberation Sans", sans-serif; }
.over { font: 700 14px/11px "Liberation Sans", sans-serif; color: #1f5a86; flex-direction: column; }
.over::before { content: ""; width: 11px; height: 2px; background: #222; }
.at { font: 700 14px/16px "Liberation Sans", sans-serif; color: #1f5a86; }
.lab { display: flex; justify-content: center; width: 21px; font: 700 9px/14px "Liberation Sans", sans-serif; }
.lab svg { width: 16px; height: 16px; }
.oblique { font: italic 700 14px/16px "Liberation Sans", sans-serif; color: #1f5a86; }
.row2 input { flex: 0 0 39px; width: 39px; height: 19px; background: #fff; border: solid #777; border-width: 1px 0 0 1px; font: 10px/14px var(--mono); padding-bottom: 3px; }
.ud { flex: none; width: 14px; margin-left: 3px; display: flex; flex-direction: column; }
.ud button { height: 9px; border: 1px solid #b4b4b4; background: #f6f6f6; }
.ud button::after { content: ""; border: 3px solid transparent; border-bottom-color: #4b62b8; border-top: 0; }
.ud .dn::after { border-top: 3px solid #4b62b8; border-bottom: 0; }

.tabs { height: 14px; display: flex; background: #efefef; border-top: 1px solid #999; }
.tabs > button { width: 17px; border-right: 1px solid #aaa; background: #f6f6f6; }
.tabs > button svg { width: 16px; height: 12px; }
.sheets { position: relative; display: flex; align-items: flex-start; margin-left: 2px; padding-left: 6px; }
.sheets svg { position: absolute; left: 0; top: 0; width: 120px; height: 14px; }
.sheets button { position: relative; width: 23px; margin-right: 9px; font-size: 11px; line-height: 12px; height: 12px; color: #999; white-space: nowrap; }
.sheets button + button { width: 30px; }
.sheets .cur { color: #fff; }

.command { height: 58px; display: flex; padding: 16px 0 0 4px; border-bottom: 1px solid #999; background: linear-gradient(#fff 0 5px, #888 5px 7px, #efefef 7px); }
.command .grip { height: 38px; margin-right: 5px; }
.lines { flex: 1; display: grid; grid-template-columns: auto 1fr; grid-template-rows: 21px 18px; background: #fff; border: solid #777; border-width: 2px 0 0 1px; font: 12px/18px var(--mono); white-space: pre; }
.lines p { grid-column: 1 / 3; line-height: 16px; border-bottom: 1px solid #999; }
.lines span { font-size: 15px; line-height: 16px; }
.lines input { height: 18px; line-height: 18px; }

.status { height: 24px; display: flex; align-items: center; padding-left: 4px; gap: 4px; background: #efebeb; border-bottom: 1px solid #555; }
.status output { flex: 0 0 205px; height: 17px; border: 1px solid #b0b0b0; border-right-color: #999; color: #999; font: 9px/16px "DejaVu Sans Mono", monospace; white-space: nowrap; }
.status > button { height: 18px; padding: 0 1px; font: 11px/14px "Noto Sans CJK SC", sans-serif; color: #111; border: 1px solid #fff; border-right-color: #999; white-space: nowrap; }
.status > button.lat { font: 10px/14px var(--mono); padding: 0; }
.status > button.down { border: solid #222; border-width: 1px 0 0 1px; padding: 0 2px 0 1px; }
.ime { margin-left: auto; display: flex; align-items: center; gap: 3px; width: 123px; height: 20px; padding-left: 2px; background: linear-gradient(#fff, #e9f4fc); border: solid #a9c6dc; border-width: 1px 0 1px 1px; overflow: hidden; }
.ime svg { flex: none; width: 16px; height: 16px; }
.ime span { flex: none; font: 700 14px/16px "Noto Sans CJK SC", sans-serif; color: #4a8fd2; }

.taskbar { height: 4px; display: flex; padding-left: 12px; gap: 3px; background: linear-gradient(#999, #555); overflow: hidden; }
.orb { flex: 0 0 24px; height: 20px; border-radius: 50%; background: #a8cbe0; margin-right: 87px; }
.task { flex: 0 0 147px; background: linear-gradient(#ccc, #888); border: 1px solid #333; border-bottom: 0; padding: 0 8px; }
.task.lit { background: #ddd; }
.task i { display: block; width: 27px; height: 3px; }
.teal { background: #2c8a7c; }
.yel { background: #e9dd98; }
.blu { background: #3a5fd8; }

.mark { position: absolute; right: 42px; bottom: 18px; width: 190px; height: 90px; pointer-events: none; }
.bai { font: 700 37px "Liberation Sans", sans-serif; }
.du { font: 700 23px "Liberation Sans", sans-serif; }
.jy { font: 700 30px "Noto Sans CJK SC", sans-serif; }
.url { font: 400 20px "Noto Sans", sans-serif; }
</style>
